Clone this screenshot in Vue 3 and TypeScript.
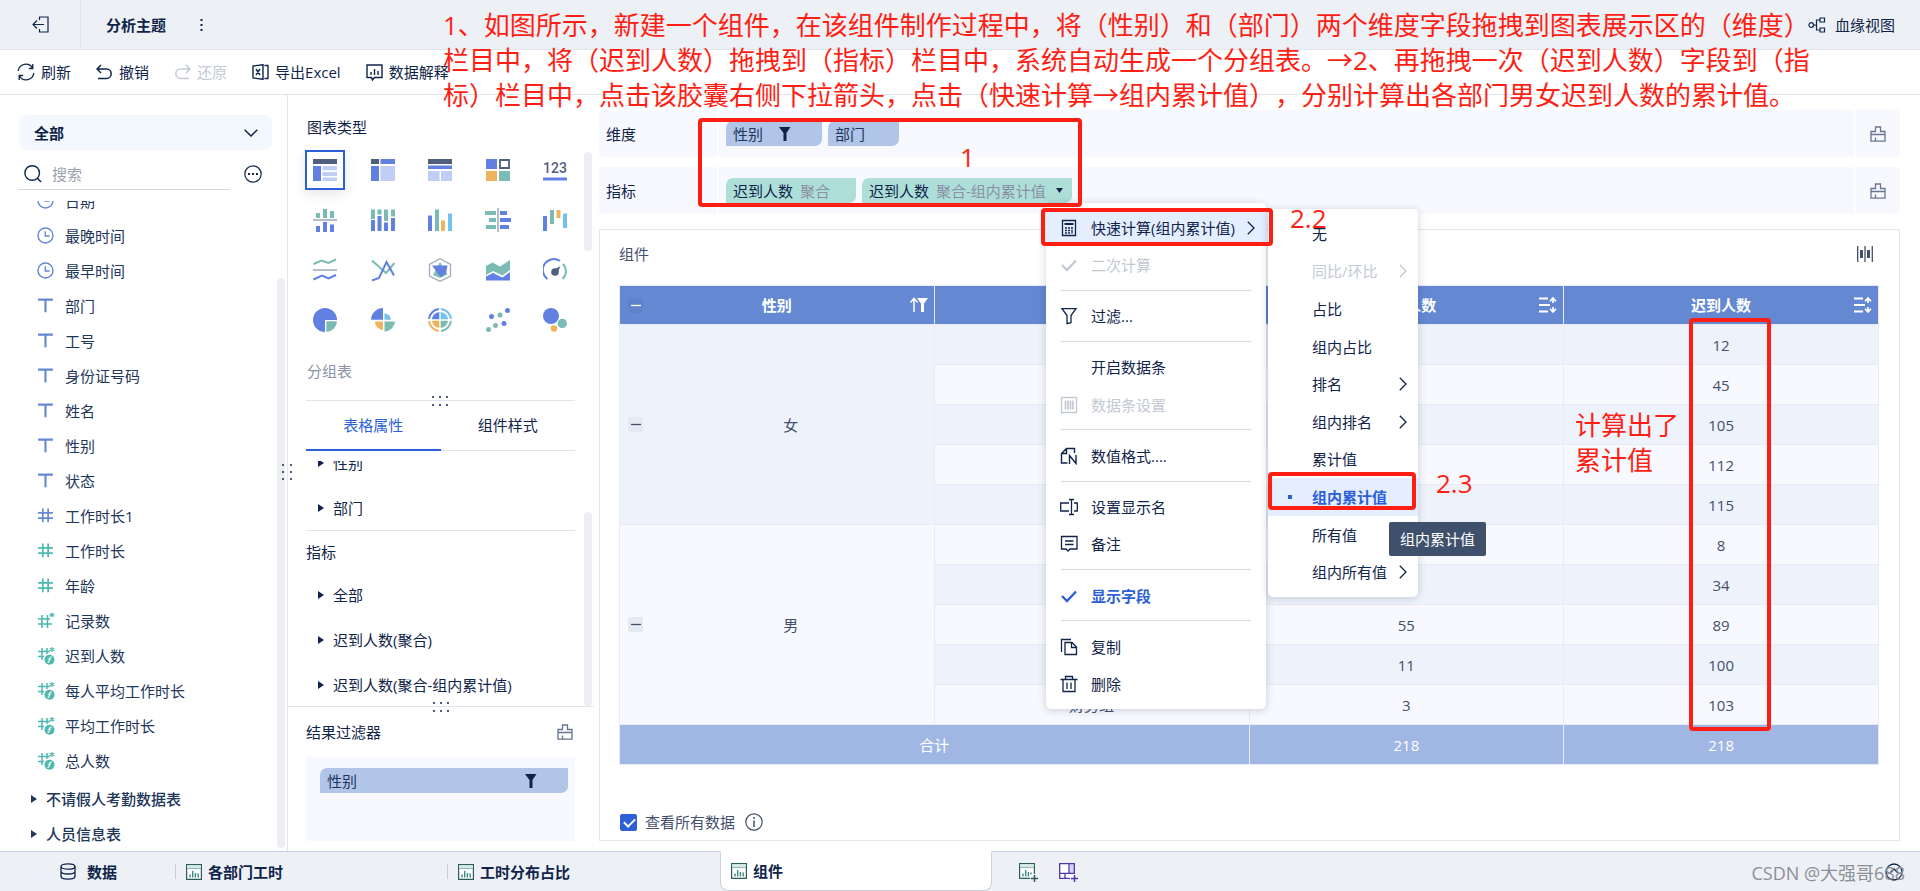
<script setup lang="ts">
import { ref } from 'vue'

type FieldKind = 'time' | 'text' | 'num-dim' | 'num' | 'num-star' | 'num-calc'
interface Field { name: string; kind: FieldKind }

const keyword = ref('')
const showAll = ref(true)

const fields: Field[] = [
  { name: '日期', kind: 'time' },
  { name: '最晚时间', kind: 'time' },
  { name: '最早时间', kind: 'time' },
  { name: '部门', kind: 'text' },
  { name: '工号', kind: 'text' },
  { name: '身份证号码', kind: 'text' },
  { name: '姓名', kind: 'text' },
  { name: '性别', kind: 'text' },
  { name: '状态', kind: 'text' },
  { name: '工作时长1', kind: 'num-dim' },
  { name: '工作时长', kind: 'num' },
  { name: '年龄', kind: 'num' },
  { name: '记录数', kind: 'num-star' },
  { name: '迟到人数', kind: 'num-calc' },
  { name: '每人平均工作时长', kind: 'num-calc' },
  { name: '平均工作时长', kind: 'num-calc' },
  { name: '总人数', kind: 'num-calc' },
]
const tables = ['不请假人考勤数据表', '人员信息表']

const charts = [
  'group-table', 'cross-table', 'detail-table', 'block', 'kpi',
  'mirror-bar', 'stack-bar', 'bar', 'mirror-row', 'waterfall',
  'range-line', 'line', 'radar', 'area', 'gauge',
  'pie', 'rose', 'multi-pie', 'scatter', 'bubble',
]
const activeChart = ref('group-table')

const metrics = ['全部', '迟到人数(聚合)', '迟到人数(聚合-组内累计值)']

interface Row { dept: string; count: number; total: number }
const groups: { name: string; rows: Row[] }[] = [
  {
    name: '女',
    rows: [
      { dept: '', count: 12, total: 12 },
      { dept: '', count: 33, total: 45 },
      { dept: '', count: 60, total: 105 },
      { dept: '', count: 7, total: 112 },
      { dept: '', count: 3, total: 115 },
    ],
  },
  {
    name: '男',
    rows: [
      { dept: '', count: 8, total: 8 },
      { dept: '', count: 26, total: 34 },
      { dept: '', count: 55, total: 89 },
      { dept: '', count: 11, total: 100 },
      { dept: '财务组', count: 3, total: 103 },
    ],
  },
]

interface MenuItem { label?: string; icon?: string; state?: 'disabled' | 'hover' | 'active'; more?: boolean; line?: boolean }
const menu: MenuItem[] = [
  { label: '快速计算(组内累计值)', icon: 'calc', state: 'hover', more: true },
  { label: '二次计算', icon: 'check', state: 'disabled' },
  { line: true },
  { label: '过滤...', icon: 'filter' },
  { line: true },
  { label: '开启数据条' },
  { label: '数据条设置', icon: 'databar', state: 'disabled' },
  { line: true },
  { label: '数值格式....', icon: 'format' },
  { line: true },
  { label: '设置显示名', icon: 'rename' },
  { label: '备注', icon: 'note' },
  { line: true },
  { label: '显示字段', icon: 'check', state: 'active' },
  { line: true },
  { label: '复制', icon: 'copy' },
  { label: '删除', icon: 'trash' },
]
const submenu: MenuItem[] = [
  { label: '无' },
  { label: '同比/环比', state: 'disabled', more: true },
  { label: '占比' },
  { label: '组内占比' },
  { label: '排名', more: true },
  { label: '组内排名', more: true },
  { label: '累计值' },
  { label: '组内累计值', state: 'active' },
  { label: '所有值' },
  { label: '组内所有值', more: true },
]
</script>

<template>
  <div class="app">
    <svg class="defs" aria-hidden="true">
      <symbol id="brush" viewBox="0 0 16 16">
        <path d="M1 15.2V5.5h4.5V1h5v4.500h4.500v9.700zM1 8.500h14M5.500 15v-3.500" fill="none" stroke="currentColor" stroke-width="1.3" />
      </symbol>
      <symbol id="funnel-solid" viewBox="0 0 12 14"><path d="M0 0h11.500L7.500 6v8h-3V6z" fill="currentColor" /></symbol>
      <symbol id="chevron" viewBox="0 0 8 14"><path d="M.8.8 7 7 .8 13.200" fill="none" stroke="currentColor" stroke-width="1.3" /></symbol>
      <symbol id="grip" viewBox="0 0 17 10">
        <path d="M0 0h2v2H0zM7 0h2v2H7zM14 0h2v2h-2zM0 8h2v2H0zM7 8h2v2H7zM14 8h2v2h-2z" fill="#4a5a78" />
      </symbol>
      <symbol id="triangle" viewBox="0 0 6 8"><path d="M0 0 6 4 0 8z" fill="currentColor" /></symbol>
      <symbol id="sheet" viewBox="0 0 16 16">
        <path d="M.600.600h14.800v14.800H.600z" fill="#fff" stroke="#2b5c5a" stroke-width="1.200" />
        <path d="M1.200 1.200h13.600v3H1.200z" fill="#d3e9e6" /><path d="M1 4.600h14" stroke="#8fb5b0" />
        <path d="M4 13.500v-3M6.700 13.500V7M9.400 13.500V9M12.200 13.500v-4" stroke="#3a8c82" stroke-width="1.400" />
      </symbol>
      <symbol id="sort" viewBox="0 0 18 16">
        <path d="M0 1.500h9M0 8h11M0 14.500h9" stroke="#fff" stroke-width="1.800" />
        <path d="M14 1v5M14 10v5M11 4.300 14 1l3 3.300M11 11.700 14 15l3-3.300" fill="none" stroke="#fff" stroke-width="1.700" />
      </symbol>

      <symbol id="k-time" viewBox="0 0 17 17">
        <circle cx="8" cy="8" r="7.100" fill="none" stroke="#6488d2" stroke-width="1.300" />
        <path d="M7.800 4v4.500H12" fill="none" stroke="#6488d2" stroke-width="1.300" />
      </symbol>
      <symbol id="k-text" viewBox="0 0 17 17"><path d="M1 2.500h14M8 2.500v12" stroke="#6488d2" stroke-width="2" /></symbol>
      <symbol id="k-num-dim" viewBox="0 0 17 17"><path d="M1 5.500h14M1 10.500h14M5.500 1.500v13M10.500 1.500v13" stroke="#6488d2" stroke-width="1.600" /></symbol>
      <symbol id="k-num" viewBox="0 0 17 17"><path d="M1 5.500h14M1 10.500h14M5.500 1.500v13M10.500 1.500v13" stroke="#4cb8ae" stroke-width="1.600" /></symbol>
      <symbol id="k-num-star" viewBox="0 0 18 17">
        <path d="M1 6.500h12M1 11.500h14M5 2.500v13M10.500 2.500v13" stroke="#4cb8ae" stroke-width="1.600" />
        <path d="M15 0v5M12.700 1.200l4.600 2.600M12.700 3.800l4.600-2.600" stroke="#4cb8ae" stroke-width="1.100" />
      </symbol>
      <symbol id="k-num-calc" viewBox="0 0 18 18">
        <path d="M1 4.500h12M1 9.500h6M5 1v12M10 1v6" stroke="#4cb8ae" stroke-width="1.500" />
        <path d="M15 0v5M12.700 1.200l4.600 2.600M12.700 3.800l4.600-2.600" stroke="#4cb8ae" stroke-width="1.100" />
        <circle cx="12.500" cy="12.800" r="5" fill="#4cb8ae" />
        <path d="M14.800 10.200c-2-.700-2 .600-2.300 2.300-.300 1.900-.500 3.100-2 2.800M10.800 12.300h3.300" fill="none" stroke="#fff" stroke-width="1.100" />
      </symbol>

      <symbol id="c-group-table" viewBox="0 0 24 24">
        <path d="M0 1h24v5H0z" fill="#505f7d" /><path d="M0 8h8v15H0z" fill="#6280e2" />
        <path d="M9.500 8H24v4.300H9.500zM9.500 14H24v4H9.500zM9.500 19.500H24V23H9.500z" fill="#c0cdf5" />
      </symbol>
      <symbol id="c-cross-table" viewBox="0 0 24 24">
        <path d="M0 1h8v5H0z" fill="#505f7d" /><path d="M9.500 1H24v5H9.500zM0 8h8v15H0z" fill="#6280e2" />
        <path d="M9.500 8H24v15H9.500z" fill="#c0cdf5" />
      </symbol>
      <symbol id="c-detail-table" viewBox="0 0 24 24">
        <path d="M0 1h24v5H0z" fill="#505f7d" /><path d="M0 7.500h24v3.500H0z" fill="#6280e2" />
        <path d="M0 13h11.500v10H0zM13 13h11v10H13z" fill="#c0cdf5" />
      </symbol>
      <symbol id="c-block" viewBox="0 0 24 24">
        <path d="M0 1h11v10H0z" fill="#6280e2" /><path d="M14 2h9v8h-9z" fill="none" stroke="#505f7d" stroke-width="1.800" />
        <path d="M0 13h11v10H0z" fill="#eeb35c" /><path d="M13 13h11v10H13z" fill="#7abcb4" />
      </symbol>
      <symbol id="c-kpi" viewBox="0 0 24 24">
        <text x="12" y="15" text-anchor="middle" font-family="Roboto, sans-serif" font-size="14" font-weight="500" fill="#505f7d">123</text>
        <path d="M0 19.500h24v3H0z" fill="#6280e2" />
      </symbol>
      <symbol id="c-mirror-bar" viewBox="0 0 24 24">
        <path d="M3 5h4v5H3zM10 1h4v9h-4zM17 3h4v7h-4z" fill="#7abcb4" /><path d="M0 11h24v2H0z" fill="#b5bccb" />
        <path d="M3 18h4v6H3zM10 14h4v10h-4zM17 16.500h4V24h-4z" fill="#6280e2" />
      </symbol>
      <symbol id="c-stack-bar" viewBox="0 0 24 24">
        <path d="M0 1.500h4V11H0zM6.500 1.500h4v5h-4zM13 1.500h4V13h-4zM20 1.500h4v7h-4z" fill="#7abcb4" />
        <path d="M0 12h4v11H0zM6.500 8h4v15h-4zM13 14.500h4V23h-4zM20 10h4v13h-4z" fill="#6280e2" />
      </symbol>
      <symbol id="c-bar" viewBox="0 0 24 24">
        <path d="M0 7.500h4V23H0z" fill="#6280e2" /><path d="M7 1.500h4V23H7z" fill="#7abcb4" />
        <path d="M13 12.500h4V23h-4z" fill="#eeb35c" /><path d="M20 5.500h4V23h-4z" fill="#71c3ef" />
      </symbol>
      <symbol id="c-mirror-row" viewBox="0 0 26 24">
        <path d="M0 3h11v4H0zM4 10h7v4H4zM1 17h10v4H1z" fill="#7abcb4" /><path d="M12 0h2v24h-2z" fill="#b5bccb" />
        <path d="M15 3h7v4h-7zM15 10h11v4H15zM15 17h9v4h-9z" fill="#6280e2" />
      </symbol>
      <symbol id="c-waterfall" viewBox="0 0 24 24">
        <path d="M0 8h4v15H0z" fill="#6280e2" /><path d="M7 2h4v14H7z" fill="#7abcb4" />
        <path d="M13.500 2h4v8h-4z" fill="#eeb35c" /><path d="M20 5.500h4V20h-4z" fill="#71c3ef" />
      </symbol>
      <symbol id="c-range-line" viewBox="0 0 24 24">
        <path d="M.500 6 8.500 2.500 15.500 5 23 1.500" fill="none" stroke="#7abcb4" stroke-width="2" />
        <path d="M0 11h24v2H0z" fill="#b5bccb" />
        <path d="M.500 21.500 9 17.500l6.500 3L23 17" fill="none" stroke="#6280e2" stroke-width="2" />
      </symbol>
      <symbol id="c-line" viewBox="0 0 24 24">
        <path d="M1 2.500 15 15l8.500-10" fill="none" stroke="#7abcb4" stroke-width="2" />
        <path d="M1 22.500 8 20 15.500 4 23 17.500" fill="none" stroke="#6280e2" stroke-width="2" />
      </symbol>
      <symbol id="c-radar" viewBox="0 0 24 24">
        <path d="M12 .800 22.500 6.500v11.500L12 23.300 1.500 18V6.500z" fill="none" stroke="#a3abbd" stroke-width="1.300" />
        <path d="M12 4l7.500 12.500L12 20l-7-3z" fill="#7abcb4" /><path d="M4 7.500h15.500l-1.500 8-5.500 3.500z" fill="#6280e2" />
      </symbol>
      <symbol id="c-area" viewBox="0 0 24 24">
        <path d="M0 8l6.500-3.500L14 8.500 24 2v10l-7.500 5.500L7 13l-7 4z" fill="#7abcb4" />
        <path d="M0 18.500 7 15l9.500 4.500L24 14v8.500H0z" fill="#6280e2" />
      </symbol>
      <symbol id="c-gauge" viewBox="0 0 24 24">
        <path d="M4.500 21A10.500 10.500 0 0 1 17 3" fill="none" stroke="#6280e2" stroke-width="2" />
        <path d="M20 6a10.500 10.500 0 0 1-.500 15" fill="none" stroke="#7abcb4" stroke-width="2" />
        <circle cx="12" cy="14" r="3.800" fill="#505f7d" /><path d="M10 12.500 17.500 8 14 16z" fill="#505f7d" />
      </symbol>
      <symbol id="c-pie" viewBox="0 0 24 24">
        <path d="M12 24A12 12 0 1 1 24 12H12z" fill="#6280e2" /><path d="M13.300 13.300H24A11 11 0 0 1 13.300 24z" fill="#7abcb4" />
      </symbol>
      <symbol id="c-rose" viewBox="0 0 24 24">
        <path d="M12 0v11.700H0A12 12 0 0 1 12 0z" fill="#6280e2" /><path d="M13.500 5.500a6.500 6.500 0 0 1 6.500 6.200h-6.500z" fill="#71c3ef" />
        <path d="M4 13.500h8V22a8.500 8.500 0 0 1-8-8.500z" fill="#eeb35c" /><path d="M13.500 13.500H24A10.500 10.500 0 0 1 13.500 23.500z" fill="#7abcb4" />
      </symbol>
      <symbol id="c-multi-pie" viewBox="0 0 24 24">
        <g fill="none" stroke-width="2">
          <path d="M1 11A11 11 0 0 1 11 1" stroke="#6280e2" /><path d="M13 1a11 11 0 0 1 10 10" stroke="#71c3ef" />
          <path d="M1 13a11 11 0 0 0 10 10" stroke="#eeb35c" /><path d="M13 23a11 11 0 0 0 10-10" stroke="#7abcb4" />
        </g>
        <path d="M4 11.300A8 8 0 0 1 11.300 4v7.300z" fill="#6280e2" /><path d="M12.700 4A8 8 0 0 1 20 11.300h-7.300z" fill="#71c3ef" />
        <path d="M4 12.700h7.300V20A8 8 0 0 1 4 12.700z" fill="#eeb35c" /><path d="M12.700 12.700H20a8 8 0 0 1-7.300 7.300z" fill="#7abcb4" />
      </symbol>
      <symbol id="c-scatter" viewBox="0 0 24 24">
        <g fill="#6280e2"><circle cx="21.500" cy="2.500" r="2.500" /><circle cx="5.500" cy="8.500" r="2.500" /><circle cx="18" cy="15.500" r="2.500" /></g>
        <g fill="#7abcb4"><circle cx="14" cy="7" r="2.500" /><circle cx="9.500" cy="17.500" r="2.500" /><circle cx="2.500" cy="21.500" r="2.500" /></g>
      </symbol>
      <symbol id="c-bubble" viewBox="0 0 24 24">
        <circle cx="8" cy="8" r="8" fill="#6280e2" /><circle cx="19.300" cy="15.500" r="4.700" fill="#7abcb4" /><circle cx="11" cy="20.500" r="3.300" fill="#eeb35c" />
      </symbol>

      <symbol id="m-calc" viewBox="0 0 18 18">
        <path d="M2.500 1.500h13v15h-13z" fill="none" stroke="currentColor" stroke-width="1.300" />
        <path d="M4.500 5h9" stroke="currentColor" stroke-width="2" />
        <path d="M5 9h2M8 9h2M11 9h2M5 11.500h2M8 11.500h2M5 14h2M8 14h2M12 10.500v4" stroke="currentColor" stroke-width="1.300" />
      </symbol>
      <symbol id="m-check" viewBox="0 0 18 18"><path d="M2 9l5 5 9-9.500" fill="none" stroke="currentColor" stroke-width="2.400" /></symbol>
      <symbol id="m-filter" viewBox="0 0 18 18"><path d="M2 1.700h14L11 8.500v7.200l-4 1V8.500z" fill="none" stroke="currentColor" stroke-width="1.300" /></symbol>
      <symbol id="m-databar" viewBox="0 0 18 18">
        <path d="M1.500 1.500h15v15h-15z" fill="none" stroke="currentColor" stroke-width="1.300" /><path d="M5.500 4.500v9M8 4.500v9M10.500 4.500v9M13 4.500v9" stroke="currentColor" stroke-width="1.700" />
      </symbol>
      <symbol id="m-format" viewBox="0 0 18 18">
        <path d="M7.500 16H1.500V6.500l5-5h8V6M6.500 1.500v5h-5M9.500 17V8.500l6.500 8V8" fill="none" stroke="currentColor" stroke-width="1.400" />
      </symbol>
      <symbol id="m-rename" viewBox="0 0 18 18"><path d="M9 13H.700V5H9M14 5h3.300v8H14M11.500 1.500v15M9 1.500h5M9 16.500h5" fill="none" stroke="currentColor" stroke-width="1.300" /></symbol>
      <symbol id="m-note" viewBox="0 0 18 18"><path d="M1.500 1.500h15.500v12.500H10l-2 2-2-2H1.500zM5 6h8.500M5 9.500h8.500" fill="none" stroke="currentColor" stroke-width="1.300" /></symbol>
      <symbol id="m-copy" viewBox="0 0 18 18"><path d="M1.500 14V1.500H11M5 4.500h7l4.500 4.500v7.500H5zM11.500 4.500V9.500h5" fill="none" stroke="currentColor" stroke-width="1.300" /></symbol>
      <symbol id="m-trash" viewBox="0 0 18 18"><path d="M.500 4.500h17M5.500 4.500v-3h7v3M3 4.500v12h12v-12M7 7.500v6.500M11 7.500v6.500" fill="none" stroke="currentColor" stroke-width="1.300" /></symbol>
    </svg>

    <header class="topbar">
      <button class="exit" aria-label="退出">
        <svg width="17" height="17" viewBox="0 0 17 17"><path d="M7.500 4V1H16v15H7.500v-3M12 8.500H1M5 4.500l-4 4 4 4" fill="none" stroke="currentColor" stroke-width="1.200" /></svg>
      </button>
      <h1 class="title">分析主题</h1>
      <button class="more" aria-label="更多">
        <svg width="3" height="12" viewBox="0 0 3 12"><path d="M.500 0h2v2h-2zM.500 5h2v2h-2zM.500 10h2v2h-2z" fill="currentColor" /></svg>
      </button>
      <button class="lineage">
        <svg width="18" height="16" viewBox="0 0 18 16"><path d="M5.500 8h3M12 3H8.500v10H12" fill="none" stroke="currentColor" stroke-width="1.200" /><circle cx="3.200" cy="8" r="2.300" fill="none" stroke="currentColor" stroke-width="1.200" /><path d="M12 1h4.500v4H12zM12 11h4.500v4H12z" fill="none" stroke="currentColor" stroke-width="1.200" /></svg>
        血缘视图
      </button>
    </header>

    <nav class="toolbar">
      <button><svg width="18" height="18" viewBox="0 0 18 18"><path d="M1.200 8A7.700 7.700 0 0 1 15.500 5M16.800 10A7.700 7.700 0 0 1 2.500 13M15.800 1v4.500h-4M2.200 17v-4.500h4" fill="none" stroke="currentColor" stroke-width="1.300" /></svg>刷新</button>
      <button><svg width="17" height="16" viewBox="0 0 17 16"><path d="M5 1 1 5l4 4M1 5h9.500a4.700 4.700 0 0 1 0 9.400H2" fill="none" stroke="currentColor" stroke-width="1.500" /></svg>撤销</button>
      <button disabled><svg width="17" height="16" viewBox="0 0 17 16"><path d="M12 1l4 4-4 4M16 5H6.500a4.700 4.700 0 0 0 0 9.400H15" fill="none" stroke="currentColor" stroke-width="1.500" /></svg>还原</button>
      <button><svg width="17" height="16" viewBox="0 0 17 16"><path d="M1 2l10-1.300v14.600L1 14zM12.500 1.500H16v13h-3.500M4 5l4 6M8 5l-4 6" fill="none" stroke="currentColor" stroke-width="1.400" /></svg>导出Excel</button>
      <button><svg width="17" height="17" viewBox="0 0 17 17"><path d="M1 1h15v12.500H8.500L6.500 16l-1-2.500H1zM5 11V8M8.500 11V5M12 11V7" fill="none" stroke="currentColor" stroke-width="1.400" /></svg>数据解释</button>
    </nav>

    <div class="body">
      <aside class="fields">
        <div class="scope">
          <select aria-label="数据范围"><option>全部</option></select>
          <svg width="14" height="8" viewBox="0 0 14 8"><path d="M.700.700 7 7 13.300.700" fill="none" stroke="currentColor" stroke-width="1.500" /></svg>
        </div>
        <div class="search-row">
          <label class="search">
            <svg width="18" height="18" viewBox="0 0 18 18"><circle cx="8.200" cy="8" r="7.300" fill="none" stroke="currentColor" stroke-width="1.400" /><path d="M13.500 13.300 17 17" stroke="currentColor" stroke-width="1.500" /></svg>
            <input v-model="keyword" type="text" placeholder="搜索" aria-label="搜索" />
          </label>
          <button aria-label="更多操作">
            <svg width="18" height="18" viewBox="0 0 18 18"><circle cx="9" cy="9" r="8.200" fill="none" stroke="currentColor" stroke-width="1.200" /><path d="M4 8h2v2H4zM8 8h2v2H8zM12 8h2v2h-2z" fill="currentColor" /></svg>
          </button>
        </div>
        <div class="field-scroll">
          <div class="field-list">
            <ul>
              <li v-for="f in fields" :key="f.name"><svg width="18" height="18"><use :href="'#k-' + f.kind" /></svg>{{ f.name }}</li>
            </ul>
            <ul class="tables">
              <li v-for="t in tables" :key="t"><svg width="6" height="10"><use href="#triangle" /></svg>{{ t }}</li>
            </ul>
          </div>
          <i class="thumb"></i>
        </div>
        <svg class="side-grip" width="10" height="17" viewBox="0 0 10 17"><path d="M0 0h2v2H0zM8 0h2v2H8zM0 7h2v2H0zM8 7h2v2H8zM0 14h2v2H0zM8 14h2v2H8z" fill="#4a5a78" /></svg>
      </aside>

      <section class="config">
        <div class="chart-zone">
          <h2>图表类型</h2>
          <div class="chart-grid">
            <button v-for="c in charts" :key="c" :class="{ on: activeChart === c }" :aria-label="c" @click="activeChart = c">
              <svg :width="c === 'mirror-row' ? 26 : 24" height="24"><use :href="'#c-' + c" /></svg>
            </button>
          </div>
          <p>分组表</p>
          <i class="thumb"></i>
        </div>
        <div class="split"><svg width="17" height="10"><use href="#grip" /></svg></div>
        <div class="tabs" role="tablist">
          <button class="on" role="tab" aria-selected="true">表格属性</button>
          <button role="tab" aria-selected="false">组件样式</button>
        </div>
        <div class="props">
          <div class="prop-list">
            <ul>
              <li><svg width="6" height="10"><use href="#triangle" /></svg>性别</li>
              <li><svg width="6" height="10"><use href="#triangle" /></svg>部门</li>
            </ul>
            <h3>指标</h3>
            <ul>
              <li v-for="m in metrics" :key="m"><svg width="6" height="10"><use href="#triangle" /></svg>{{ m }}</li>
            </ul>
          </div>
          <i class="thumb"></i>
        </div>
        <div class="split wide"><svg width="17" height="10"><use href="#grip" /></svg></div>
        <div class="result-head">
          <h2>结果过滤器</h2>
          <button aria-label="清空过滤器"><svg width="16" height="16"><use href="#brush" /></svg></button>
        </div>
        <div class="result-box">
          <div class="pill dim"><span>性别</span><svg width="12" height="14"><use href="#funnel-solid" /></svg></div>
        </div>
      </section>

      <main class="work">
        <div class="shelf">
          <div class="shelf-name">维度</div>
          <div class="shelf-area">
            <div class="pill dim gender"><span>性别</span><svg width="12" height="14"><use href="#funnel-solid" /></svg></div>
            <div class="pill dim dept"><span>部门</span></div>
          </div>
          <button aria-label="清空维度"><svg width="16" height="16"><use href="#brush" /></svg></button>
        </div>
        <div class="shelf">
          <div class="shelf-name">指标</div>
          <div class="shelf-area">
            <div class="pill metric sum"><span>迟到人数</span><em>聚合</em></div>
            <div class="pill metric running">
              <span>迟到人数</span><em>聚合-组内累计值</em>
              <svg width="7" height="5" viewBox="0 0 7 5"><path d="M0 0h7L3.500 5z" fill="currentColor" /></svg>
              <div class="menu" role="menu">
                <template v-for="(m, i) in menu" :key="i">
                  <hr v-if="m.line" />
                  <button v-else role="menuitem" :class="m.state" :disabled="m.state === 'disabled'">
                    <svg class="ico" width="18" height="18"><use v-if="m.icon" :href="'#m-' + m.icon" /></svg>
                    {{ m.label }}
                    <svg v-if="m.more" class="go" width="8" height="14"><use href="#chevron" /></svg>
                  </button>
                </template>
                <div class="submenu" role="menu">
                  <button v-for="s in submenu" :key="s.label" role="menuitem" :class="s.state" :disabled="s.state === 'disabled'">
                    {{ s.label }}
                    <svg v-if="s.more" class="go" width="8" height="14"><use href="#chevron" /></svg>
                  </button>
                  <div class="tip" role="tooltip">组内累计值</div>
                </div>
              </div>
            </div>
          </div>
          <button aria-label="清空指标"><svg width="16" height="16"><use href="#brush" /></svg></button>
        </div>

        <section class="widget">
          <div class="widget-head">
            <h2>组件</h2>
            <button aria-label="列宽"><svg width="16" height="16" viewBox="0 0 16 16"><path d="M.700 0v16M8 0v16M15.300 0v16" stroke="#43506b" stroke-width="1.300" /><path d="M4.500 4v8M11.500 4v8" stroke="#43506b" stroke-width="3" /></svg></button>
          </div>
          <table>
            <thead>
              <tr>
                <th><div><svg class="fold" width="15" height="15" viewBox="0 0 15 15"><path d="M0 0h15v15H0z" fill="#5f82cc" /><path d="M3 7.500h10" stroke="#fff" stroke-width="1.300" /></svg>性别<svg class="tool" width="18" height="16" viewBox="0 0 18 16"><path d="M4 15V2M.500 5.500 4 1.500l3.500 4" fill="none" stroke="#fff" stroke-width="1.500" /><path d="M7 1h11l-4 5.500V15h-3V6.500z" fill="#fff" /></svg></div></th>
                <th>部门</th>
                <th><div>迟到人数<svg class="tool" width="18" height="16"><use href="#sort" /></svg></div></th>
                <th><div>迟到人数<svg class="tool" width="18" height="16"><use href="#sort" /></svg></div></th>
              </tr>
            </thead>
            <tbody>
              <template v-for="g in groups" :key="g.name">
                <tr v-for="(r, i) in g.rows" :key="i">
                  <td v-if="i === 0" :rowspan="g.rows.length">
                    <div class="group"><svg class="fold" width="15" height="15" viewBox="0 0 15 15"><path d="M0 0h15v15H0z" fill="#e4e9f3" /><path d="M3 7.500h10" stroke="#43506b" stroke-width="1.300" /></svg>{{ g.name }}</div>
                  </td>
                  <td>{{ r.dept }}</td>
                  <td>{{ r.count }}</td>
                  <td>{{ r.total }}</td>
                </tr>
              </template>
            </tbody>
            <tfoot>
              <tr><td colspan="2">合计</td><td>218</td><td>218</td></tr>
            </tfoot>
          </table>
          <div class="widget-foot">
            <label><input v-model="showAll" type="checkbox" />查看所有数据</label>
            <svg width="18" height="18" viewBox="0 0 18 18"><circle cx="9" cy="9" r="8.200" fill="none" stroke="currentColor" stroke-width="1.200" /><path d="M9 7.500V14M9 4v2" stroke="currentColor" stroke-width="1.500" /></svg>
          </div>
        </section>
      </main>
    </div>

    <footer class="sheets">
      <button class="data"><svg width="16" height="17" viewBox="0 0 16 17"><path d="M1 3.500v10C1 17 15 17 15 13.500v-10M1 8.500c0 3.300 14 3.300 14 0" fill="none" stroke="currentColor" stroke-width="1.300" /><ellipse cx="8" cy="3.500" rx="7" ry="2.700" fill="none" stroke="currentColor" stroke-width="1.300" /></svg>数据</button>
      <button class="sheet"><svg width="16" height="16"><use href="#sheet" /></svg>各部门工时</button>
      <button class="sheet"><svg width="16" height="16"><use href="#sheet" /></svg>工时分布占比</button>
      <button class="sheet on"><svg width="16" height="16"><use href="#sheet" /></svg>组件</button>
      <div class="adders">
        <button aria-label="添加组件"><svg width="20" height="20" viewBox="0 0 20 20"><path d="M11 15.400H.600V.600h14.800V11" fill="#fff" stroke="#2b5c5a" stroke-width="1.200" /><path d="M1.200 1.200h13.600v3H1.200z" fill="#d3e9e6" /><path d="M1 4.600h14" stroke="#8fb5b0" /><path d="M4 13.500v-3M6.700 13.500V7M9.400 13.500V9M12 11.500v-2" stroke="#3a8c82" stroke-width="1.400" /><path d="M15.500 12v7M12 15.500h7" stroke="#2b5c5a" stroke-width="1.500" /></svg></button>
        <button aria-label="添加仪表板"><svg width="20" height="20" viewBox="0 0 20 20"><path d="M.700.700h14.600v14.600H.700z" fill="#fff" /><path d="M10.500 1h5v9h-5z" fill="#d9d3f5" /><path d="M11 15.300H.700V.700h14.600V11M.700 10.300h14.600M10 .700v9.600M6 10.300v5" fill="none" stroke="#5038a8" stroke-width="1.300" /><path d="M15.500 12v7M12 15.500h7" stroke="#5038a8" stroke-width="1.500" /></svg></button>
      </div>
      <button class="collapse" aria-label="展开"><svg width="18" height="18" viewBox="0 0 18 18"><circle cx="9" cy="9" r="8" fill="none" stroke="currentColor" stroke-width="1.300" /><path d="M5 10l4-4 4 4" fill="none" stroke="currentColor" stroke-width="1.300" /></svg></button>
      <span class="credit">CSDN @大强哥688</span>
    </footer>

    <div class="notes">
      <p class="guide">1、如图所示，新建一个组件，在该组件制作过程中，将（性别）和（部门）两个维度字段拖拽到图表展示区的（维度）<br />栏目中，将（迟到人数）拖拽到（指标）栏目中，系统自动生成一个分组表。→2、再拖拽一次（迟到人数）字段到（指<br />标）栏目中，点击该胶囊右侧下拉箭头，点击（快速计算→组内累计值），分别计算出各部门男女迟到人数的累计值。</p>
      <i class="frame f-shelf"></i>
      <i class="frame f-menu"></i>
      <i class="frame f-option"></i>
      <i class="frame f-column"></i>
      <b class="n-1">1</b>
      <b class="n-22">2.2</b>
      <b class="n-23">2.3</b>
      <p class="n-result">计算出了<br />累计值</p>
    </div>
  </div>
</template>

<style>
body { margin: 0; overflow: hidden; }
</style>

<style scoped>
* { box-sizing: border-box; }
.app { position: relative; display: flex; flex-direction: column; height: 100vh; background: #fff; color: #10244a; font: 15px/20px "Open Sans", "Noto Sans CJK SC", sans-serif; white-space: nowrap; }
.defs { position: absolute; width: 0; height: 0; }
svg { flex: none; display: block; }
h1, h2, h3, p, ul { margin: 0; padding: 0; font-size: 15px; font-weight: 400; list-style: none; }
button { display: flex; align-items: center; margin: 0; padding: 0; border: 0; background: none; color: inherit; font: inherit; white-space: nowrap; }
i, em { font-style: normal; }

.topbar { display: flex; align-items: center; height: 50px; background: #edf1f6; border-bottom: 1px solid #e1e5ee; }
.exit { width: 81px; height: 49px; justify-content: center; border-right: 1px solid #e1e5ee; }
.title { margin-left: 25px; font-weight: 700; }
.more { margin-left: 34px; }
.lineage { margin-left: auto; margin-right: 25px; gap: 9px; }

.toolbar { display: flex; gap: 25px; height: 45px; padding-left: 17px; border-bottom: 1px solid #e1e5ee; }
.toolbar button { gap: 6px; }
.toolbar button:disabled { color: #c3c9d4; }

.body { flex: 1; min-height: 0; display: flex; }

.fields { position: relative; display: flex; flex-direction: column; width: 288px; padding-top: 20px; border-right: 1px solid #e1e5ee; }
.scope { display: flex; align-items: center; height: 35px; margin: 0 15px 0 19px; padding-right: 14px; border-radius: 8px; background: #f3f8ff; }
.scope select { flex: 1; height: 35px; padding: 0 0 0 15px; border: 0; background: none; appearance: none; color: #0b1f44; font: inherit; font-weight: 700; }
.search-row { display: flex; justify-content: space-between; height: 40px; padding: 0 25px 0 18px; }
.search { display: flex; align-items: center; gap: 10px; width: 212px; padding: 8px 0 0 6px; border-bottom: 1px solid #d5d8de; }
.search input { flex: 1; min-width: 0; padding: 0; border: 0; outline: 0; background: none; font: inherit; color: inherit; }
.search input::placeholder { color: #9ba2af; }
.search-row button { padding-top: 8px; }
.field-scroll { flex: 1; min-height: 0; display: flex; margin-top: 11px; overflow: hidden; }
.field-list { flex: 1; margin-top: -18px; }
.field-list li { display: flex; align-items: center; gap: 10px; height: 35px; padding-left: 37px; color: #22365a; }
.tables { padding-top: 3px; }
.tables li { gap: 9px; padding-left: 31px; font-weight: 500; }
.thumb { display: block; width: 8px; border-radius: 4px; background: #edeef3; }
.field-scroll .thumb { margin: 77px 2px 3px 0; }
.side-grip { position: absolute; right: -5px; top: 369px; }

.config { display: flex; flex-direction: column; width: 311px; padding-left: 18px; }
.chart-zone { position: relative; padding: 22px 24px 19px 0; }
.chart-zone .thumb { position: absolute; right: 7px; top: 57px; height: 99px; }
.chart-zone h2 { padding-left: 1px; }
.chart-grid { display: grid; grid-template-columns: repeat(5, 40px); justify-content: space-between; row-gap: 10px; margin: 13px 0 21px -1px; }
.chart-grid button { justify-content: center; height: 40px; }
.chart-grid .on { border: 2px solid #2c5fd8; box-shadow: 0 4px 12px #0000001a; }
.chart-zone p { padding-left: 1px; color: #8a93a6; }
.split { display: flex; align-items: center; justify-content: center; height: 1px; margin-right: 24px; background: #e1e5ee; }
.split svg { overflow: visible; }
.split.wide { margin: 0 5px 0 -18px; }
.tabs { display: flex; height: 50px; margin-right: 24px; border-bottom: 1px solid #e1e5ee; }
.tabs button { flex: 1; justify-content: center; height: 50px; border-bottom: 2px solid transparent; }
.tabs .on { color: #2c5fd8; border-color: #2c5fd8; }
.props { flex: 1; min-height: 0; display: flex; gap: 9px; margin-top: 10px; padding-right: 7px; overflow: hidden; }
.prop-list { flex: 1; margin-top: -21px; }
.prop-list li { display: flex; align-items: center; gap: 9px; height: 45px; padding-left: 12px; }
.prop-list h3 { display: flex; align-items: center; height: 42px; border-top: 1px solid #e1e5ee; }
.props .thumb { margin-top: 51px; }
.result-head { display: flex; align-items: center; justify-content: space-between; height: 50px; margin-right: 26px; color: #10244a; }
.result-head button { color: #667594; }
.result-box { height: 84px; margin: 0 24px 10px 0; padding: 11px 7px 0 14px; background: #f8f9fe; }
.result-box .pill { padding-right: 31px; justify-content: space-between; }

.pill { display: flex; align-items: center; height: 25px; padding: 0 7px; border-radius: 7px 0 7px 0; }
.pill em { color: #8a8fa5; }
.dim { background: #b0c5e8; }
.dim span { color: #22365a; }
.metric { gap: 7px; background: #addfd8; }

.work { flex: 1; min-width: 0; display: flex; flex-direction: column; padding: 15px 20px 10px 0; }
.shelf { display: flex; height: 47px; margin-bottom: 10px; background: #f8f9fe; }
.shelf-name { display: flex; align-items: center; width: 120px; padding-left: 7px; border-right: 2px solid #fff; }
.shelf-area { flex: 1; display: flex; align-items: center; gap: 6px; padding-left: 7px; border-right: 2px solid #fff; }
.shelf > button { justify-content: center; width: 44px; color: #667594; }
.gender { width: 96px; gap: 16px; }
.dept { width: 71px; }
.sum { width: 130px; }
.running { position: relative; width: 210px; }
.running > svg { margin-left: 3px; }

.menu { position: absolute; z-index: 5; left: 184px; top: 25px; display: flex; flex-direction: column; width: 220px; height: 506px; padding: 6px 0; border-radius: 5px; background: #fff; box-shadow: 0 1px 8px #0a1e4033; }
.menu button { flex: 1; position: relative; width: 100%; }
.menu > button { padding-left: 14px; gap: 13px; }
.menu hr { width: 190px; height: 1px; margin: 6px 15px 7px; border: 0; background: #d5dae3; }
.menu .hover { background: #e5eefe; }
.menu .disabled { color: #c3c9d4; }
.menu .active { color: #2c5fd8; font-weight: 700; }
.go { position: absolute; right: 11px; }
.submenu { position: absolute; left: 222px; top: 6px; display: flex; flex-direction: column; width: 150px; height: 388px; padding: 6px 0; border-radius: 5px; background: #fff; box-shadow: 0 1px 8px #0a1e4033; }
.submenu button { padding-left: 44px; }
.submenu .active { background: #e5eefe; }
.submenu .active::before { content: ""; position: absolute; left: 20px; width: 4px; height: 4px; background: #2c5fd8; }
.tip { position: absolute; left: 121px; top: 313px; padding: 7px 11px; border-radius: 2px; background: #3f506c; color: #fff; }

.widget { flex: 1; display: flex; flex-direction: column; margin-top: 5px; padding: 0 20px 0 19px; border: 1px solid #e3e6ee; }
.widget-head { display: flex; align-items: center; justify-content: space-between; height: 48px; margin-bottom: 7px; padding-right: 6px; color: #43506b; }
table { width: 100%; border-collapse: collapse; table-layout: fixed; color: #43506b; text-align: center; }
th, td { height: 40px; padding: 0; border: 1px solid #e6ebf7; }
th { height: 39px; background: #6488d2; color: #fff; font-weight: 700; }
th > div, td > div { position: relative; display: flex; align-items: center; justify-content: center; }
td > .group { padding-left: 28px; }
.fold { position: absolute; left: 8px; }
.tool { position: absolute; right: 6px; }
tbody tr:nth-child(odd) { background: #eef3fb; }
tbody tr:nth-child(even) { background: #f8f9fe; }
tfoot td { background: #a1b7e3; color: #fff; }
.widget-foot { display: flex; align-items: center; gap: 10px; height: 36px; margin-top: auto; color: #43506b; }
.widget-foot label { display: flex; align-items: center; gap: 8px; }
.widget-foot input { appearance: none; position: relative; width: 17px; height: 17px; margin: 0 0 0 1px; border: 1px solid #2c5fd8; border-radius: 2px; background: #fff; }
.widget-foot input:checked { background: #2c5fd8; }
.widget-foot input:checked::after { content: ""; position: absolute; left: 5px; top: 1px; width: 5px; height: 9px; border: solid #fff; border-width: 0 2px 2px 0; transform: rotate(45deg); }

.sheets { position: relative; display: flex; height: 40px; background: #edf1f6; font-weight: 700; }
.sheets > * { border-top: 1px solid #ccd0de; }
.sheets button { position: relative; }
.data { width: 176px; padding-left: 60px; gap: 11px; }
.sheet { width: 272px; padding-left: 10px; gap: 6px; }
.data::after, .sheet:not(.on)::after { content: ""; position: absolute; right: 0; top: 12px; width: 1px; height: 15px; background: #c8cdd9; }
.sheet:has(+ .on)::after { display: none; }
.sheets .on { border: 1px solid #ccd0de; border-top-color: #fff; border-radius: 0 0 8px 8px; background: #fff; }
.adders { flex: 1; display: flex; gap: 20px; padding-left: 27px; }
.adders button { padding-top: 2px; }
.collapse { padding-right: 17px; }
.sheets .credit { position: absolute; right: 15px; top: 12px; border: 0; color: #8c8f96; font-size: 18px; font-weight: 400; }

.notes { position: absolute; inset: 0; z-index: 10; pointer-events: none; overflow: hidden; color: #ff1e14; font-size: 26px; line-height: 35px; text-spacing-trim: space-all; }
.notes p, .notes b { position: absolute; font-size: 26px; font-weight: 400; }
.guide { left: 443px; top: 8px; }
.frame { position: absolute; border: 4px solid #ff1e14; border-radius: 4px; }
.f-shelf { left: 698px; top: 118px; width: 384px; height: 89px; }
.f-menu { left: 1041px; top: 208px; width: 232px; height: 38px; }
.f-option { left: 1268px; top: 472px; width: 148px; height: 38px; }
.f-column { right: 149px; top: 318px; width: 82px; height: 413px; }
.n-1 { left: 960px; top: 140px; }
.n-22 { left: 1290px; top: 201px; }
.n-23 { left: 1436px; top: 466px; }
.n-result { right: 241px; top: 408px; }
</style>
